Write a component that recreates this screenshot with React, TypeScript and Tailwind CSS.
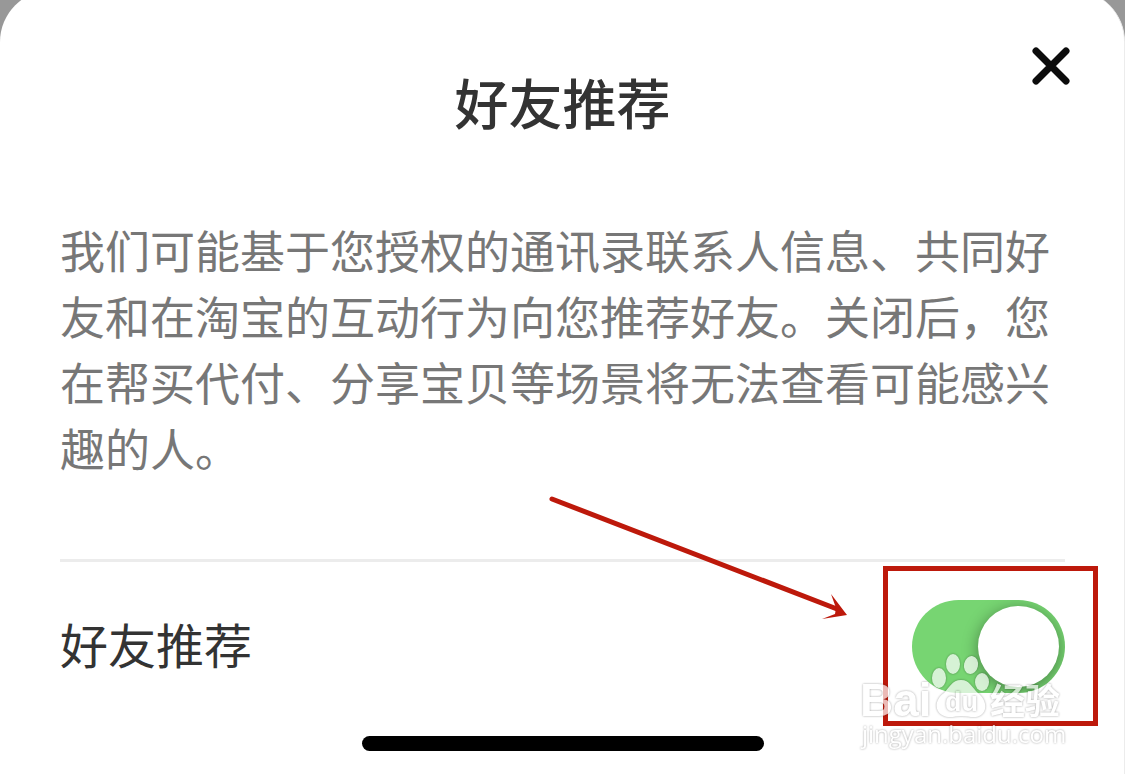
import { useState } from 'react';

const description =
    '我们可能基于您授权的通讯录联系人信息、共同好友和在淘宝的互动行为向您推荐好友。关闭后，您在帮买代付、分享宝贝等场景将无法查看可能感兴趣的人。';

const CloseIcon = () => (
    <svg viewBox="0 0 38 38" className="h-[38px] w-[38px]" aria-hidden="true">
        <path d="M4 4L34 34M34 4L4 34" fill="none" stroke="#0c0c0c" strokeWidth="7" strokeLinecap="round" />
    </svg>
);

// Arrow that points to the switch
const Arrow = () => (
    <svg viewBox="0 0 304 126" className="absolute -top-[107px] right-[216px] h-[126px] w-[304px]" aria-hidden="true">
        <path d="M7 6L292 116" fill="none" stroke="#bd190b" strokeWidth="5" strokeLinecap="round" />
        <path d="M302 122L286 101L291 115L290 121L277 126Z" fill="#bd190b" />
    </svg>
);

const Watermark = () => (
    <svg
        viewBox="0 0 210 105"
        className="pointer-events-none absolute -right-1 top-[50px] h-[105px] w-[210px] overflow-visible opacity-70"
        aria-hidden="true"
    >
        <g fill="#ffffff">
            <g className="[filter:drop-shadow(0_0_1px_rgba(0,0,0,0.5))]">
                <ellipse cx="80" cy="28" rx="7" ry="10" />
                <ellipse cx="94" cy="14" rx="7" ry="10" />
                <ellipse cx="112" cy="15" rx="7" ry="9" transform="rotate(12 112 15)" />
                <ellipse cx="123" cy="32" rx="7" ry="9" />
                <path d="M102 30C93 30 90 38 85 43C76 49 75 61 83 65C90 69 96 66 102 66C110 66 116 69 122 65C129 60 127 49 119 43C113 38 111 30 102 30Z" />
            </g>
            <g className="font-['Liberation_Sans',sans-serif] font-bold [filter:drop-shadow(0_0_1px_rgba(0,0,0,0.5))]">
                <text x="1" y="66" fontSize="46">Bai</text>
                <text x="86" y="61" fontSize="27">du</text>
            </g>
            <g className="[filter:drop-shadow(0_0_1px_rgba(0,0,0,0.5))]">
                <text x="131" y="64" fontSize="35" className="font-['Noto_Sans_CJK_SC',sans-serif] font-bold">经验</text>
                <text x="3" y="93" fontSize="24" className="font-['Open_Sans',sans-serif]">jingyan.baidu.com</text>
            </g>
        </g>
    </svg>
);

export default function App() {
    const [enabled, setEnabled] = useState(true);

    return (
        <div className="min-h-screen overflow-hidden bg-[#989898] font-['Noto_Sans_CJK_SC',sans-serif]">
            <main className="relative -mt-[10px] flex min-h-[calc(100vh+10px)] flex-col rounded-t-[52px] border-r border-[#ececec] bg-white pt-[80px] pr-[59px] pb-[23px] pl-[60px]">
                {/* Header */}
                <h1 className="text-center text-[54px] leading-[64px] font-medium text-[#333333]">好友推荐</h1>
                <button type="button" aria-label="关闭" className="absolute top-[57px] right-[54px]">
                    <CloseIcon />
                </button>

                <p className="mt-[83px] text-[45px] leading-[66px] text-[#777777]">{description}</p>

                {/* Setting row */}
                <div className="mt-[78px] flex items-center justify-between border-t-3 border-[#ececec] py-[38px]">
                    <label htmlFor="recommend" className="pb-2 text-[48px] leading-[64px] text-[#333333]">
                        好友推荐
                    </label>
                    <div className="relative">
                        <input
                            id="recommend"
                            type="checkbox"
                            role="switch"
                            checked={enabled}
                            onChange={(e) => setEnabled(e.target.checked)}
                            className="block h-[93px] w-[153px] appearance-none overflow-hidden rounded-full bg-gray-300 p-[6px] before:block before:size-[81px] before:rounded-full before:bg-white before:shadow-[0_3px_16px_rgba(0,0,0,0.4)] checked:bg-[#77d572] checked:before:ml-auto"
                        />
                        <div className="pointer-events-none absolute -top-[34px] -right-[33px] -bottom-[33px] -left-[29px] border-5 border-[#bd190b]" />
                        <Arrow />
                        <Watermark />
                    </div>
                </div>

                {/* Home indicator */}
                <div className="mx-auto mt-auto h-[15px] w-[40%] max-w-[402px] rounded-full bg-black" />
            </main>
        </div>
    );
}
